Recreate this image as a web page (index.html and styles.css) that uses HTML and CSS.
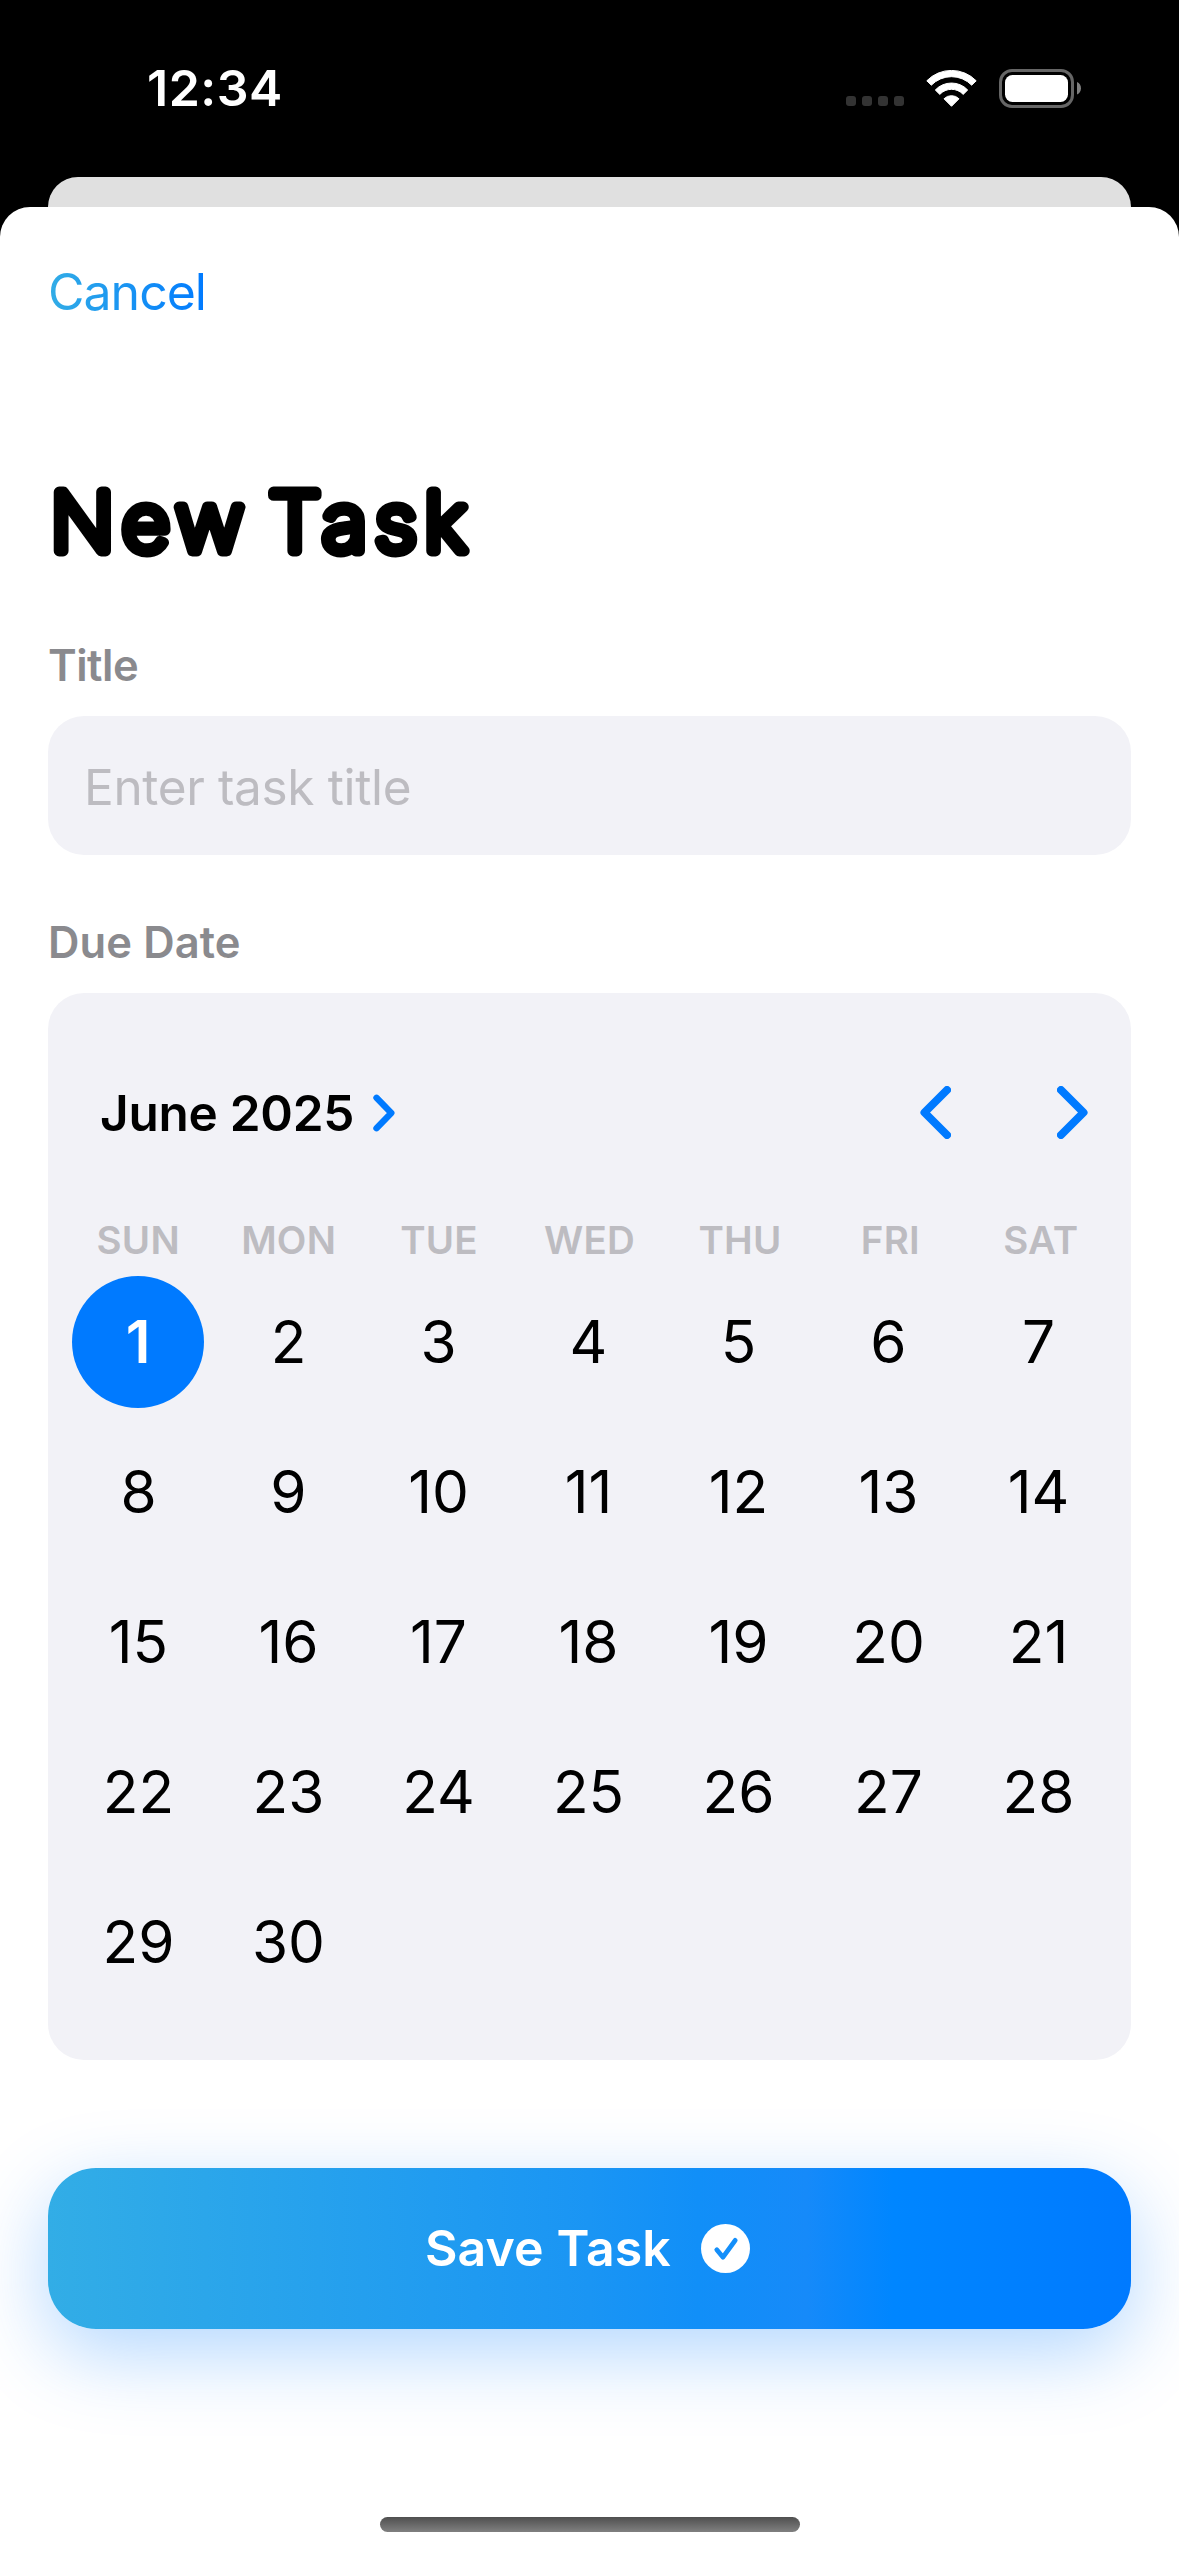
FILE: index.html
```html
<!DOCTYPE html>
<html lang="en">
<head>
<meta charset="utf-8">
<title>New Task</title>
<link rel="stylesheet" href="styles.css">
</head>
<body>
<div class="screen">
  <header class="status-bar">
    <span class="time">12:34</span>
    <div class="status-icons">
      <div class="signal"><i></i><i></i><i></i><i></i></div>
      <svg class="wifi" width="51" height="37" viewBox="0 0 51 37" fill="#fff" stroke="#fff" stroke-width="1" stroke-linejoin="round">
        <path d="M.8 10.8A34.5 34.5 0 0 1 50.2 10.8L45.7 15.2A28.2 28.2 0 0 0 5.3 15.2Z"/>
        <path d="M9.3 20A22.3 22.3 0 0 1 41.7 20L37.2 24.4A16 16 0 0 0 13.8 24.4Z"/>
        <path d="M18 28.8A10.5 10.5 0 0 1 33 28.8L25.5 36.3Z"/>
      </svg>
      <svg class="battery" width="82" height="39" viewBox="0 0 82 39">
        <rect x="1.5" y="1.5" width="72" height="36" rx="11.5" fill="none" stroke="#666" stroke-width="3"/>
        <rect x="6" y="6" width="63" height="27" rx="7.5" fill="#fff"/>
        <path d="M78 13C80.6 14 82 16.5 82 19.3S80.6 24.6 78 25.6Z" fill="#808080"/>
      </svg>
    </div>
  </header>
  <div class="sheet-behind"></div>
  <main class="sheet">
    <nav class="nav"><span class="cancel">Cancel</span></nav>
    <h1 class="heading">
      <svg width="600" height="121" viewBox="0 0 600 121"><text transform="scale(1.022 1)" x="2.5" y="90">New Task</text></svg>
    </h1>

    <div class="label label-title">Title</div>
    <div class="field"><span class="placeholder">Enter task title</span></div>

    <div class="label label-date">Due Date</div>
    <section class="calendar">
      <div class="calendar-head">
        <span class="month">June 2025</span>
        <svg class="month-chevron" width="22" height="38" viewBox="0 0 22 38"><path d="M3.5 3.8L18.3 19L3.5 34.2"/></svg>
        <div class="pager">
          <svg width="31" height="53" viewBox="0 0 31 53"><path d="M27 4L4.5 26.5L27 49"/></svg>
          <svg width="31" height="53" viewBox="0 0 31 53"><path d="M4 4L26.5 26.5L4 49"/></svg>
        </div>
      </div>
      <div class="weekdays">
        <span>SUN</span><span>MON</span><span>TUE</span><span>WED</span><span>THU</span><span>FRI</span><span>SAT</span>
      </div>
      <div class="days">
        <span class="selected">1</span><span>2</span><span>3</span><span>4</span><span>5</span><span>6</span><span>7</span>
        <span>8</span><span>9</span><span>10</span><span>11</span><span>12</span><span>13</span><span>14</span>
        <span>15</span><span>16</span><span>17</span><span>18</span><span>19</span><span>20</span><span>21</span>
        <span>22</span><span>23</span><span>24</span><span>25</span><span>26</span><span>27</span><span>28</span>
        <span>29</span><span>30</span>
      </div>
    </section>

    <div class="save">
      <span class="save-text">Save Task</span>
      <svg width="49" height="49" viewBox="0 0 49 49">
        <circle cx="24.5" cy="24.5" r="24.5" fill="#fff"/>
        <path d="M15.8 25.8L22 33.2L34.2 16.4" fill="none" stroke="#148ffa" stroke-width="4.8" stroke-linecap="round" stroke-linejoin="round"/>
      </svg>
    </div>
    <div class="home-indicator"></div>
  </main>
</div>
</body>
</html>
```
FILE: styles.css
```css
* { box-sizing: border-box; }

body {
  margin: 0;
  background: #000;
  font-family: Inter, "Liberation Sans", sans-serif;
  color: #000;
}

svg { display: block; flex: none; }

.screen {
  width: 1179px;
  height: 2556px;
  background: #000;
  overflow: hidden;
}

/* status bar */
.status-bar {
  height: 177px;
  padding: 58px 98px 0 147px;
  display: flex;
  justify-content: space-between;
}
.time {
  height: 60px;
  line-height: 60px;
  font-size: 50px;
  font-weight: 600;
  letter-spacing: .5px;
  color: #fff;
}
.status-icons { display: flex; height: 60px; align-items: center; }
.signal { display: flex; gap: 6px; padding-top: 26px; margin-right: 22px; }
.signal i { width: 10px; height: 10px; border-radius: 3px; background: #333; }
.wifi { margin-right: 22px; }

/* sheets */
.sheet-behind {
  height: 30px;
  margin: 0 48px;
  background: #e0e0e0;
  border-radius: 30px 30px 0 0;
}
.sheet {
  height: 2349px;
  padding: 55px 48px 0;
  background: #fff;
  border-radius: 30px 30px 0 0;
  display: flex;
  flex-direction: column;
}
.nav { height: 61px; display: flex; }
.cancel {
  line-height: 61px;
  font-size: 50px;
  letter-spacing: -1px;
  background: linear-gradient(90deg, #32ade6, #007aff);
  background-clip: text;
  -webkit-background-clip: text;
  color: transparent;
}
.heading {
  margin: 138px 0 56px;
  height: 121px;
}
/* light strokes thickened with round joins give the rounded bold face */
.heading text {
  font-size: 81.5px;
  font-weight: 200;
  letter-spacing: 7.4px;
  word-spacing: -13px;
  fill: #000;
  stroke: #000;
  stroke-width: 10.8px;
  stroke-linejoin: round;
}
.label {
  height: 54px;
  line-height: 54px;
  margin-bottom: 24px;
  font-size: 43.5px;
  font-weight: 600;
  color: #8a8a8e;
}
.label-title { letter-spacing: -.5px; }
.label-date { margin-top: 60px; letter-spacing: .1px; }
.field {
  height: 139px;
  border-radius: 36px;
  background: #f2f2f7;
  display: flex;
  align-items: center;
  padding: 2px 0 0 36px;
}
.placeholder { font-size: 49.5px; letter-spacing: -.35px; color: #bdbcc1; }

/* calendar */
.calendar {
  height: 1067px;
  border-radius: 36px;
  background: #f2f2f7;
  padding: 60px 15px 0;
}
.calendar-head {
  height: 120px;
  padding: 0 28px 0 37px;
  display: flex;
  align-items: center;
}
.calendar-head path {
  fill: none;
  stroke: #007aff;
  stroke-width: 8px;
  stroke-linecap: round;
  stroke-linejoin: round;
}
.calendar-head .month-chevron path { stroke-width: 6.4px; }
.month { font-size: 49.5px; font-weight: 600; letter-spacing: -.25px; width: 273px; white-space: nowrap; }
.pager { margin-left: auto; display: flex; gap: 106px; padding-bottom: 1px; }
.weekdays, .days { display: grid; grid-template-columns: repeat(7, 1fr); text-align: center; }
.weekdays {
  margin-top: 40px;
  height: 54px;
  line-height: 54px;
  font-size: 38.5px;
  font-weight: 600;
  letter-spacing: .2px;
  color: #bdbcc1;
}
.days { width: 1050px; grid-auto-rows: 150px; line-height: 150px; font-size: 58.5px; }
.days span:not(.selected) { padding-left: 1px; }
.days .selected {
  width: 132px;
  height: 132px;
  line-height: 132px;
  place-self: center;
  border-radius: 50%;
  background: #007aff;
  color: #fff;
  font-weight: 600;
}

/* save button */
.save {
  flex: none;
  height: 161px;
  margin-top: 108px;
  border-radius: 48px;
  background: linear-gradient(90deg, #32ade6 0%, #1a95f4 50%, #118ff8 60%, #168af9 70%, #0086ff 78%, #007aff 100%);
  box-shadow: 0 24px 80px rgba(0, 122, 255, .3);
  display: flex;
  align-items: center;
  padding-left: 377px;
  color: #fff;
}
.save-text {
  width: 276px;
  padding-bottom: 2px;
  line-height: 60px;
  font-size: 50px;
  font-weight: 600;
  letter-spacing: .1px;
  white-space: nowrap;
}

.home-indicator {
  flex: none;
  width: 420px;
  height: 15px;
  margin: 188px auto 0;
  border-radius: 8px;
  background: linear-gradient(#4f4f4f, #808080);
}
```
